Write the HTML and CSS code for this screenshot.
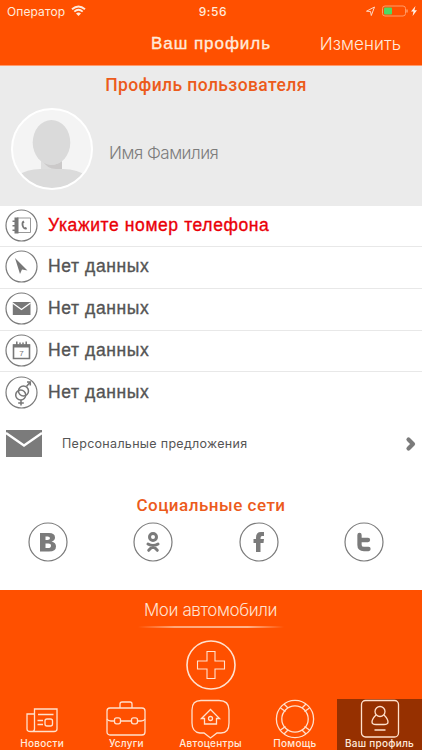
FILE: index.html
```html
<!DOCTYPE html>
<html lang="ru">
<head>
<meta charset="utf-8">
<title>Ваш профиль</title>
<link rel="stylesheet" href="styles.css">
</head>
<body>
<div class="app">
  <header class="top">
    <div class="status">
      <div class="carrier"><span>Оператор</span>
        <svg width="15" height="12" viewBox="0 0 15 12" fill="none" stroke="#ffeadb" stroke-width="1.9"><path d="M1 4.2Q7.500-1.400 14 4.200M3.300 6.600Q7.500 3 11.700 6.600"/><path d="M5 8.600Q7.500 6.600 10 8.600L7.500 11Z" fill="#ffeadb" stroke="none"/></svg>
      </div>
      <div class="time">9:56</div>
      <div class="power">
        <svg width="52" height="14" viewBox="0 0 52 14" fill="none" stroke="#ffd9c4"><path d="M1.500 7.200L9.500 3L6.300 11.500L5.500 7.500Z" stroke-width="1"/><rect x="17.500" y="2" width="23" height="10" rx="2.500" stroke="#ff9b68"/><rect x="19" y="3.500" width="8" height="7" rx="1" fill="#4cd964" stroke="none"/><path d="M42 5.500V8.500" stroke="#ff9b68" stroke-width="1.500"/><path d="M50.500 2L46 7.600H48.500L47.600 12L52 6.300H49.400Z" fill="#fff0e6" stroke="none"/></svg>
      </div>
    </div>
    <div class="nav"><span></span><h1>Ваш профиль</h1><a class="edit">Изменить</a></div>
  </header>

  <section class="user">
    <h2 class="heading">Профиль пользователя</h2>
    <div class="person">
      <svg width="82" height="82" viewBox="0 0 82 82"><defs><clipPath id="face"><circle cx="41" cy="41" r="39.500"/></clipPath></defs><circle cx="41" cy="41" r="40" fill="#f4f4f4"/><g clip-path="url(#face)"><path d="M30 50H51V62H30Z" fill="#dedede"/><path d="M31 52Q40 61 51 53V61H45Q36 61 31 52Z" fill="#cbc9c9"/><path d="M5 68Q18 60 32 61H49Q65 60 78 69V82H5Z" fill="#dbdbdb"/><ellipse cx="40.500" cy="34.500" rx="18.800" ry="22.500" fill="#dadada"/></g><circle cx="41" cy="41" r="40" fill="none" stroke="#fff" stroke-width="2"/></svg>
      <span class="name">Имя Фамилия</span>
    </div>
  </section>

  <ul class="fields">
    <li class="required">
      <svg width="33" height="33" viewBox="-16.500 -16.500 33 33"><circle r="15.500" class="ring"/><path d="M-4.500-7.500H9V7H-4.500Z" fill="none" stroke="#999"/><path d="M-7-8H-3V8H-7V5.500H-9V4H-7V1H-9V-.500H-7V-3.500H-9V-5H-7Z" fill="#777"/><path d="M2-5Q-.500-4 .200 0Q1.500 4.500 5 4L5.500 2.500L4 1.500L3 2Q1.800 0 1.800-2L3-3Z" fill="#777"/></svg>
      <span>Укажите номер телефона</span></li>
    <li><svg width="33" height="33" viewBox="-16.500 -16.500 33 33"><circle r="15.500" class="ring"/><path d="M-6.500-8.500L6 4L.500 3L-1.500 7.500Z" fill="#777"/></svg><span>Нет данных</span></li>
    <li><svg width="33" height="33" viewBox="-16.500 -16.500 33 33"><circle r="15.500" class="ring"/><path d="M-8.700-6.500H9V6.500H-8.700Z" fill="#777"/><path d="M-9-5.500L0 1L9-5.500" fill="none" stroke="#fff" stroke-width="1.300"/></svg><span>Нет данных</span></li>
    <li><svg width="33" height="33" viewBox="-16.500 -16.500 33 33"><circle r="15.500" class="ring"/><path d="M-8-5.500H8V8H-8Z" fill="none" stroke="#777" stroke-width="1.600"/><path d="M-8.500-6H8.500V-3H-8.500Z" fill="#777"/><path d="M-4.700-9V-5.500M-1.500-8V-6M1.500-8V-6M4.700-9V-5.500" stroke="#777" stroke-width="1.500"/><text x="0" y="5.500" class="day">7</text></svg><span>Нет данных</span></li>
    <li><svg width="33" height="33" viewBox="-16.500 -16.500 33 33"><circle r="15.500" class="ring"/><g fill="none" stroke="#777" stroke-width="1.500"><circle cx="-.800" cy="2.500" r="5"/><circle cx="2" cy="-1.500" r="5"/><path d="M-.500 7.500V13M-3.300 10.500H2.300M5-6L8.800-10.500M5.500-10.500H8.800V-7"/></g></svg><span>Нет данных</span></li>
  </ul>

  <a class="offers">
    <svg width="36" height="27" viewBox="0 0 36 27"><path d="M0 0H36V27H0Z" fill="#7b7b7b"/><path d="M0 3L18 15.500L36 3" fill="none" stroke="#fff" stroke-width="2.300"/></svg>
    <span>Персональные предложения</span>
    <svg class="arrow" width="10" height="14" viewBox="0 0 10 14" fill="none" stroke="#7b7b7b" stroke-width="4.200" stroke-linecap="round" stroke-linejoin="round"><path d="M2.500 2.500L7 7L2.500 11.500"/></svg>
  </a>

  <section class="social">
    <h2 class="heading">Социальные сети</h2>
    <div class="links">
      <svg width="40" height="40" viewBox="-20 -20 40 40"><circle r="19" class="ring"/><path fill-rule="evenodd" d="M-8-9H1Q7-9 7-4.500Q7-1.500 3.500-.500Q8 .500 8 4.500Q8 9.500 1 9.500H-8ZM-2.500-5.500V-2H-.500Q2-2 2-3.800T-.500-5.500ZM-2.500 1.500V6H0Q3 6 3 3.700T0 1.500Z" fill="#7b7b7b"/></svg>
      <svg width="40" height="40" viewBox="-20 -20 40 40"><circle r="19" class="ring"/><g fill="none" stroke="#7b7b7b" stroke-width="3" stroke-linecap="round"><circle cy="-5" r="3.500"/><path d="M-5 2Q0 5 5 2M0 4L-4.300 8.300M0 4L4.300 8.300"/></g></svg>
      <svg width="40" height="40" viewBox="-20 -20 40 40"><circle r="19" class="ring"/><path d="M-3 10V1H-5.500V-3H-3Q-3.500-10 2-10H5V-6H3Q1.500-6 1.500-3H5L4.500 1H1.500V10Z" fill="#7b7b7b"/></svg>
      <svg width="40" height="40" viewBox="-20 -20 40 40"><circle r="19" class="ring"/><path d="M-4.500-7V3Q-4.500 7 0 7H4.500M-4.500-2H4" fill="none" stroke="#7b7b7b" stroke-width="4.300" stroke-linecap="round"/></svg>
    </div>
  </section>

  <section class="cars">
    <h2>Мои автомобили</h2>
    <div class="rule"></div>
    <svg width="50" height="50" viewBox="-25 -25 50 50" fill="none" stroke="#ffe2d0"><circle r="24" stroke-width="1.600"/><path d="M-4-13.500H4V-4H13.500V4H4V13.500H-4V4H-13.500V-4H-4Z" stroke-width="1.100"/></svg>
  </section>

  <nav class="tabs">
    <a><svg width="40" height="40" viewBox="0 0 40 40"><path d="M12.500 9H35V29Q35 31.500 32 31.500H8.500Q5 31.500 5 29V14H12.500ZM12.500 9V29Q12.500 31.500 9 31.500M16 14.500H31.500M15.500 20.500H21M15.500 24.500H21"/><rect x="23" y="19" width="7.500" height="7" rx="2"/></svg><span>Новости</span></a>
    <a><svg width="40" height="40" viewBox="0 0 40 40"><rect x="1" y="8" width="38" height="27" rx="3"/><path d="M14 8V4Q14 2 16 2H24Q26 2 26 4V8M1 19Q2 21 5 21H8.500M14.500 21H25.500M31.500 21H35Q38 21 39 19"/><rect x="8.500" y="17.800" width="6" height="6" rx="2"/><rect x="25.500" y="17.800" width="6" height="6" rx="2"/></svg><span>Услуги</span></a>
    <a><svg width="40" height="40" viewBox="0 0 40 40"><path d="M10 .500H28Q38 .500 38 10V23Q38 33 30 33H26L19.500 38L13 33H9Q1 32 1 23V10Q1 .500 10 .500Z"/><path d="M10.500 18.500L19.500 9.500L28.500 18.500H25.500V24H13.500V18.500Z"/><circle cx="19.500" cy="18.500" r="2"/></svg><span>Автоцентры</span></a>
    <a><svg width="40" height="40" viewBox="0 0 40 40"><circle cx="20" cy="19" r="18.600"/><circle cx="20" cy="19" r="13.200"/><path d="M5.500 8L10.500 11.500M9 4L13 8M31 4L27 8M34.500 8L29.500 11.500M5.500 30L10.500 26.500M9 34L13 30M31 34L27 30M34.500 30L29.500 26.500"/></svg><span>Помощь</span></a>
    <a class="active"><svg width="40" height="40" viewBox="0 0 40 40"><rect x="1.500" y=".500" width="37" height="36.500" rx="4"/><circle cx="20" cy="11.500" r="5"/><path d="M16 15Q12 19 12 22Q12 24.500 16 24.500H24Q28 24.500 28 22Q28 19 24 15M14.500 30H25.500"/></svg><span>Ваш профиль</span></a>
  </nav>
</div>
</body>
</html>
```
FILE: styles.css
```css
* { box-sizing: border-box; }
body { margin: 0; font-family: "Liberation Sans", sans-serif; background: #fff; }
h1, h2, ul { margin: 0; padding: 0; font-weight: 400; }
span, h1, h2, .edit { white-space: nowrap; }
svg { display: block; flex: none; overflow: visible; }
.app { width: 422px; height: 750px; overflow: hidden; display: flex; flex-direction: column; }
.top { height: 66px; background: #ff5000; color: #ffeadb; border-bottom: 1px solid #ff9a6b; }
.status { height: 22px; display: grid; grid-template-columns: 1fr auto 1fr; align-items: center; padding: 0 5px 0 7px; font: 400 12px Inter, sans-serif; }
.carrier { display: flex; align-items: center; gap: 6px; letter-spacing: .1px; }
.time { font-weight: 500; letter-spacing: .6px; padding-left: 2px; }
.power { justify-self: end; }
.nav { height: 43px; display: grid; grid-template-columns: 1fr auto 1fr; align-items: center; padding: 0 21px; }
.nav h1 { font-size: 17px; letter-spacing: .95px; -webkit-text-stroke: .35px; }
.edit { justify-self: end; font: 300 17px Inter, sans-serif; letter-spacing: .05px; }
.user { height: 140px; background: #ebebeb; padding-top: 8px; }
.heading { font: 500 17.5px/22px Roboto, sans-serif; color: #ec5b1c; text-align: center; letter-spacing: .4px; }
.user .heading { padding-right: 10px; }
.person { display: flex; align-items: center; gap: 16px; padding: 12px 0 0 11px; }
.name { font: 300 17px Inter, sans-serif; letter-spacing: -.5px; color: #7c7c7c; padding-top: 8px; }
.fields { height: 207px; list-style: none; }
.fields li { height: 41.75px; display: flex; align-items: center; gap: 10px; padding: 0 0 1px 5px; border-bottom: 1px solid #e8e8e8; color: #545454; font-size: 17.5px; letter-spacing: .6px; -webkit-text-stroke: .35px; }
.fields li:first-child { height: 41px; padding-bottom: 2px; }
.fields li:last-child { border: 0; padding-bottom: 2px; }
.fields .required { color: #ea0008; }
.ring { fill: #fff; stroke: #7b7b7b; stroke-width: 1.2; }
.day { font: 8px "Liberation Sans", sans-serif; text-anchor: middle; fill: #777; letter-spacing: 0; -webkit-text-stroke: 0; }
.offers { height: 72px; display: flex; align-items: center; padding: 0 6px 11px; gap: 20px; font: 400 12.5px Inter, sans-serif; letter-spacing: .3px; color: #555; }
.arrow { margin-left: auto; }
.social { height: 105px; padding-top: 9px; }
.social .heading { font-size: 17px; letter-spacing: .5px; }
.links { display: flex; justify-content: space-between; padding: 6px 38px 0 28px; }
.cars { height: 109px; background: #ff5000; color: #ffe2d0; display: flex; flex-direction: column; align-items: center; padding-top: 9px; }
.cars h2 { font: 300 17px/22px Inter, sans-serif; letter-spacing: -.4px; padding-right: 1px; }
.rule { width: 146px; height: 2px; margin: 5px 0 12px; background: linear-gradient(90deg, #ff5000, #ffa678 25%, #ffb48c 75%, #ff5000); }
.tabs { height: 51px; background: #ff5000; display: grid; grid-template-columns: repeat(4, 1fr) 85px; }
.tabs a { display: flex; flex-direction: column; align-items: center; padding-top: 1px; color: #ffeadb; font: 500 10px/12px Inter, sans-serif; }
.tabs svg { fill: none; stroke: #ffe0cc; stroke-width: 1.3; margin-bottom: -3px; }
.tabs span { letter-spacing: .25px; }
.tabs .active { background: #963000; }
```
